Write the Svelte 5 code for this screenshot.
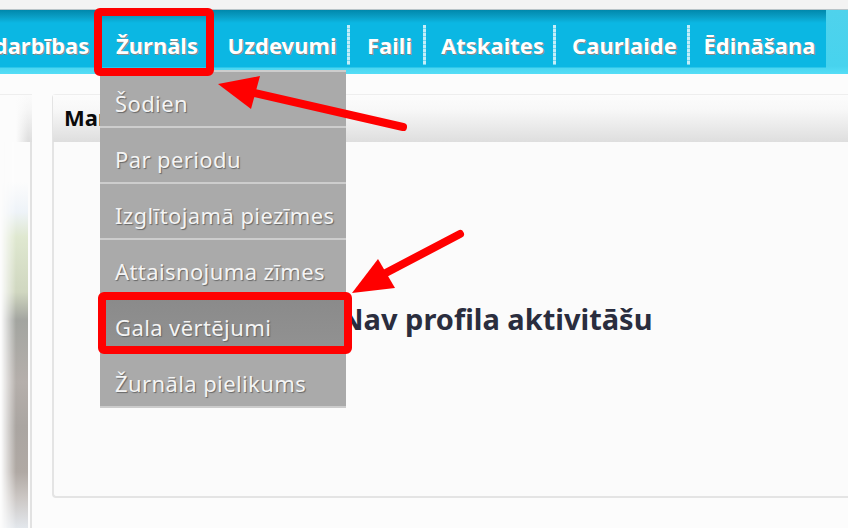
<script lang="ts">
	// widths follow the separators of the original bar, the first tab runs off the left edge
	const tabs = [
		{ label: 'darbības', width: 120 },
		{ label: 'Žurnāls', width: 111 },
		{ label: 'Uzdevumi', width: 139 },
		{ label: 'Faili', width: 76 },
		{ label: 'Atskaites', width: 130 },
		{ label: 'Caurlaide', width: 134 },
		{ label: 'Ēdināšana', width: 136 }
	];
	const menuItems = [
		'Šodien',
		'Par periodu',
		'Izglītojamā piezīmes',
		'Attaisnojuma zīmes',
		'Gala vērtējumi',
		'Žurnāla pielikums'
	];
</script>

<div class="page">
	<div class="topline"></div>
	<nav class="navbar">
		<ul class="tabs">
			{#each tabs as tab}
				<li style="width: {tab.width}px">{tab.label}</li>
			{/each}
		</ul>
	</nav>

	<main class="content">
		<aside class="side">
			<div class="side-head"></div>
			<div class="side-body"><div class="blur"></div></div>
		</aside>
		<section class="panel">
			<header>Mana</header>
			<div class="empty">Nav profila aktivitāšu</div>
		</section>
	</main>

	<ul class="menu">
		{#each menuItems as item, i}
			<li class:active={i === 4}>{item}</li>
		{/each}
	</ul>

	<svg class="marks" width="848" height="528" viewBox="0 0 848 528" aria-hidden="true">
		<rect x="98" y="12" width="112" height="60" rx="2" fill="none" stroke="#ff0000" stroke-width="8" />
		<rect x="102" y="296" width="246" height="54" rx="2" fill="none" stroke="#ff0000" stroke-width="8" />
		<line x1="403" y1="127" x2="250" y2="92" stroke="#ff0000" stroke-width="8" stroke-linecap="round" />
		<polygon points="218,84 260,76 251,109" fill="#ff0000" />
		<line x1="460" y1="234" x2="380" y2="276" stroke="#ff0000" stroke-width="8" stroke-linecap="round" />
		<polygon points="352,293 378,259 395,288" fill="#ff0000" />
	</svg>
</div>

<style>
	:global(body) {
		margin: 0;
		background: #fcfcfc;
	}

	.page {
		position: relative;
		width: 848px;
		height: 528px;
		overflow: hidden;
		font-family: 'Noto Sans', 'Open Sans', sans-serif;
	}

	.topline {
		height: 9px;
		background: #f3f3f3;
		border-bottom: 1px solid #b9c4c8;
	}

	.navbar {
		height: 64px;
		background: linear-gradient(#4fd2ec, #47d3ee 56px, #55def7 64px);
	}

	.tabs {
		display: flex;
		width: 846px;
		height: 58px;
		margin: 0 0 0 -20px;
		padding: 0;
		list-style: none;
		background: linear-gradient(#0088ac, #0a9fc6 7px, #0bb7e3 13px);
		border-bottom: 1px solid #2cc6ea;
		box-sizing: border-box;
	}

	.tabs li {
		position: relative;
		display: flex;
		align-items: center;
		justify-content: center;
		flex: none;
		height: 45px;
		margin-top: 12px;
		padding-left: 3px;
		box-sizing: border-box;
		color: #fff;
		font-size: 22px;
		font-weight: 700;
		white-space: nowrap;
		text-shadow: 1px 1px 0 #8a8a8a;
	}

	/* dashed separator at the right side of each tab */
	.tabs li:not(:last-child)::after {
		content: '';
		position: absolute;
		right: 0;
		top: 3px;
		width: 3px;
		height: 40px;
		background: repeating-linear-gradient(#c4eef9 0 3px, #74d7f0 3px 4px);
	}

	.content {
		display: flex;
		gap: 20px;
		height: 454px;
		padding-top: 20px;
		box-sizing: border-box;
	}

	.side {
		flex: none;
		width: 32px;
		display: flex;
		flex-direction: column;
		height: 434px;
		border-top: 1px solid #eeeeee;
		box-sizing: border-box;
	}

	.side-head {
		flex: none;
		height: 47px;
		background:
			linear-gradient(to right, #fcfcfc 16px, rgba(252, 252, 252, 0) 28px),
			linear-gradient(#fbfbfb, #f6f6f6 30%, #dedede);
	}

	.side-body {
		flex: 1;
		overflow: hidden;
		border-right: 2px solid #e2e2e2;
		padding-right: 2px;
		background: #fcfcfc;
	}

	.blur {
		height: 100%;
		width: 28px;
		background: linear-gradient(
			#fcfcfc 40px,
			#eef3f8 70px,
			#dfe8d0 95px,
			#d0d7c0 150px,
			#a3a5a0 178px,
			#b5afab 240px,
			#aaa5a1 285px,
			#b0a9a4 330px,
			#cbc6c3 355px,
			#e3e7ec 386px
		);
		mask-image: linear-gradient(to right, transparent 1px, #000 16px);
	}

	.panel {
		flex: 1;
		display: flex;
		flex-direction: column;
		height: 404px;
		box-sizing: border-box;
		border-top: 1px solid #eeeeee;
		border-left: 2px solid #e4e4e4;
		border-bottom: 2px solid #e4e4e4;
		border-radius: 4px 0 0 4px;
		background: #fbfbfb;
	}

	.panel header {
		flex: none;
		height: 47px;
		margin-left: -1px;
		padding: 7px 0 0 11px;
		box-sizing: border-box;
		background: linear-gradient(#fcfcfc, #f8f8f8 30%, #dedede);
		color: #0a0a0a;
		font-size: 22px;
		font-weight: 700;
	}

	.empty {
		flex: 1;
		padding: 157px 0 0 286px;
		color: #2a2d3e;
		font-size: 29px;
		font-weight: 700;
		white-space: nowrap;
	}

	.menu {
		position: absolute;
		top: 70px;
		left: 100px;
		width: 246px;
		margin: 0;
		padding: 0;
		list-style: none;
		border-bottom: 2px solid #cccccc;
	}

	.menu li {
		height: 56px;
		padding: 15px 0 0 15px;
		box-sizing: border-box;
		border-top: 2px solid #cdcdcd;
		background: #aaaaaa;
		color: #f4f4f4;
		font-size: 22px;
		letter-spacing: 0.4px;
		line-height: 32px;
		white-space: nowrap;
		text-shadow: 1px 1px 1px #666;
	}

	.menu li.active {
		background: linear-gradient(#8a8a8a, #929292);
		border-top-color: #8a8a8a;
	}

	.marks {
		position: absolute;
		top: 0;
		left: 0;
		pointer-events: none;
	}
</style>
